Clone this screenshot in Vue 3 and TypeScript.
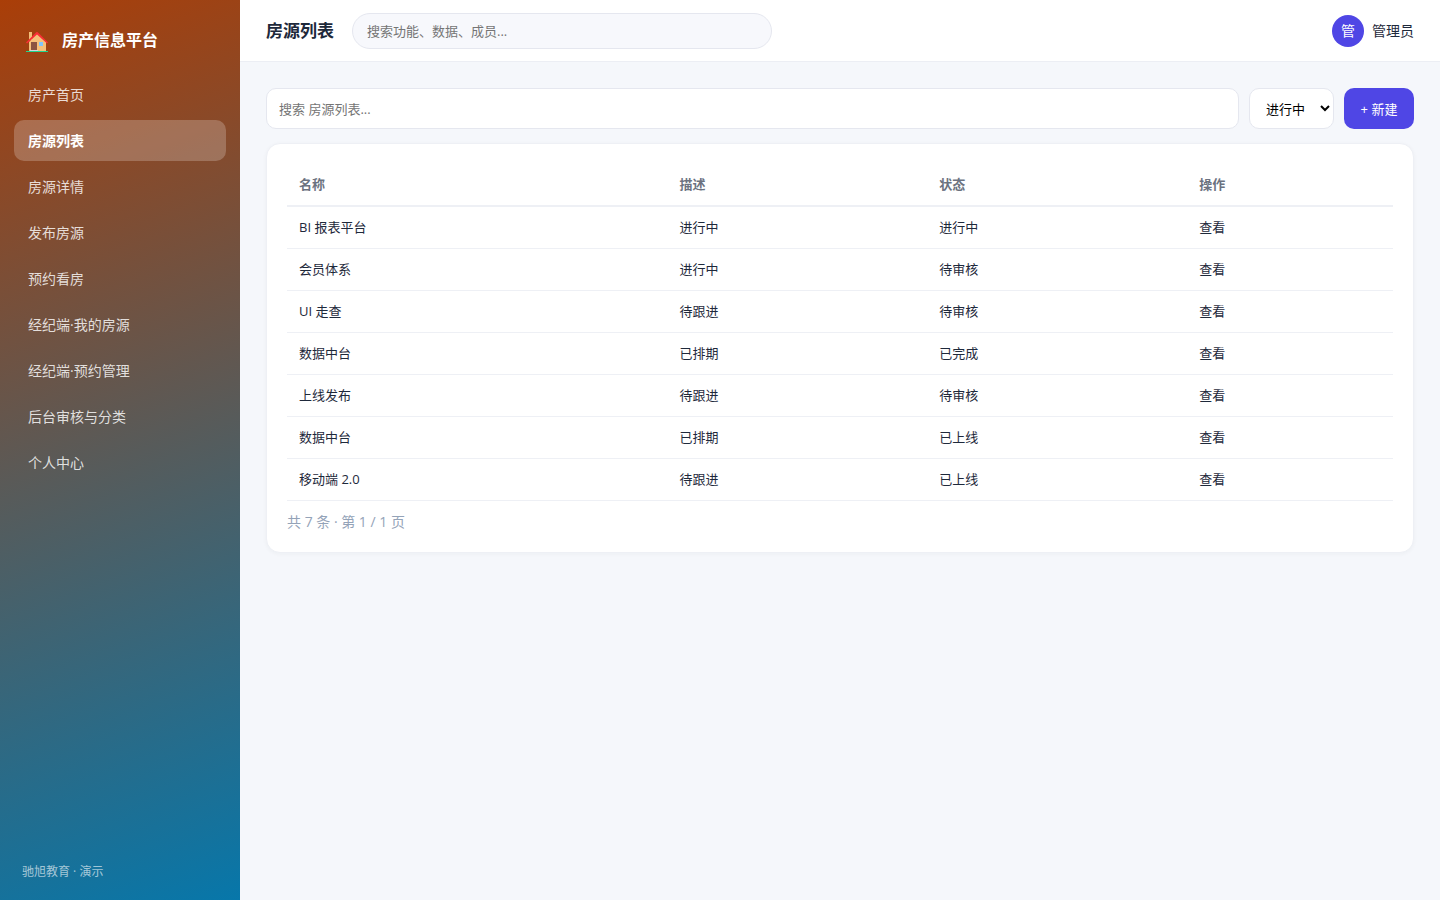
<script setup lang="ts">
import { ref } from 'vue'

interface Row {
  name: string
  desc: string
  status: string
}

const menu: string[] = [
  '房产首页',
  '房源列表',
  '房源详情',
  '发布房源',
  '预约看房',
  '经纪端·我的房源',
  '经纪端·预约管理',
  '后台审核与分类',
  '个人中心',
]
const active = ref('房源列表')
const globalQuery = ref('')
const listQuery = ref('')
const status = ref('进行中')
const statuses: string[] = ['进行中', '待审核', '已完成', '已上线']

const rows: Row[] = [
  { name: 'BI 报表平台', desc: '进行中', status: '进行中' },
  { name: '会员体系', desc: '进行中', status: '待审核' },
  { name: 'UI 走查', desc: '待跟进', status: '待审核' },
  { name: '数据中台', desc: '已排期', status: '已完成' },
  { name: '上线发布', desc: '待跟进', status: '待审核' },
  { name: '数据中台', desc: '已排期', status: '已上线' },
  { name: '移动端 2.0', desc: '待跟进', status: '已上线' },
]
</script>

<template>
  <div class="layout">
    <aside class="sidebar">
      <div class="brand">
        <svg class="logo" viewBox="0 0 22 20" aria-hidden="true">
          <path d="M3 0h3v8H3z" fill="#f2bf78" />
          <path d="M11 1 20 10v9H3v-9z" fill="#f5c07a" />
          <path d="M0 10.5 10.2.3q.8-.6 1.6 0L22 10.5l-1 .9L11 2.4 1 11.4z" fill="#f92f35" />
          <path d="M5 10h6v8H5z" fill="#8b5542" />
          <path d="M13 10h4v4h-4z" fill="#80c5fb" />
          <path d="M4 18h8v1H4z" fill="#d5d5dc" />
          <path d="M0 19h22v1H0z" fill="#20d58d" />
        </svg>
        <span>房产信息平台</span>
      </div>
      <nav class="menu">
        <a
          v-for="item in menu"
          :key="item"
          href="#"
          class="menu-item"
          :class="{ active: item === active }"
          @click.prevent="active = item"
        >{{ item }}</a>
      </nav>
      <div class="credit">驰旭教育 · 演示</div>
    </aside>

    <div class="main">
      <header class="topbar">
        <h1 class="title">房源列表</h1>
        <input v-model="globalQuery" class="global-search" type="text" placeholder="搜索功能、数据、成员..." aria-label="搜索功能、数据、成员" />
        <div class="user">
          <span class="avatar">管</span>
          <span>管理员</span>
        </div>
      </header>

      <main class="content">
        <div class="toolbar">
          <input v-model="listQuery" class="list-search" type="text" placeholder="搜索 房源列表..." aria-label="搜索 房源列表" />
          <select v-model="status" class="status" aria-label="状态">
            <option v-for="s in statuses" :key="s" :value="s">{{ s }}</option>
          </select>
          <button class="create" type="button">+ 新建</button>
        </div>

        <section class="card">
          <table class="table">
            <colgroup>
              <col class="col-name" />
              <col class="col-mid" />
              <col class="col-mid" />
              <col />
            </colgroup>
            <thead>
              <tr>
                <th>名称</th>
                <th>描述</th>
                <th>状态</th>
                <th>操作</th>
              </tr>
            </thead>
            <tbody>
              <tr v-for="(row, i) in rows" :key="i">
                <td>{{ row.name }}</td>
                <td>{{ row.desc }}</td>
                <td>{{ row.status }}</td>
                <td><a href="#" class="view" @click.prevent>查看</a></td>
              </tr>
            </tbody>
          </table>
          <div class="pager">共 7 条 · 第 1 / 1 页</div>
        </section>
      </main>
    </div>
  </div>
</template>

<style>
body {
  background: #f5f7fb;
}
</style>

<style scoped>
.layout,
.layout * {
  box-sizing: border-box;
}

.layout {
  display: flex;
  min-height: 100vh;
  background: #f5f7fb;
  color: #1e293b;
  font-family: 'Open Sans', 'Noto Sans CJK SC', sans-serif;
  font-size: 14px;
  line-height: 21px;
}

.sidebar {
  display: flex;
  flex: none;
  flex-direction: column;
  width: 240px;
  padding: 22px 14px 18px;
  background: linear-gradient(160deg, #aa3e08, #0777aa);
  color: #fff;
}

.brand {
  display: flex;
  align-items: center;
  gap: 14px;
  height: 36px;
  margin-bottom: 16px;
  padding: 0 12px;
  font-size: 16px;
  font-weight: 700;
}

.logo {
  width: 22px;
  height: 20px;
  margin-top: 4px;
}

.menu {
  display: flex;
  flex-direction: column;
  gap: 5px;
}

.menu-item {
  padding: 10px 14px;
  border-radius: 10px;
  color: rgba(255, 255, 255, 0.82);
  text-decoration: none;
}

.menu-item.active {
  background: rgba(255, 255, 255, 0.22);
  color: #fff;
  font-weight: 700;
}

.credit {
  margin-top: auto;
  padding: 0 8px;
  color: rgba(255, 255, 255, 0.62);
  font-size: 12px;
}

.main {
  flex: 1;
  min-width: 0;
}

.topbar {
  display: flex;
  align-items: center;
  gap: 18px;
  height: 62px;
  padding: 0 26px;
  border-bottom: 1px solid #eceef4;
  background: #fff;
}

.title {
  margin: 0;
  font-size: 17px;
  font-weight: 700;
}

.layout input,
.layout select,
.layout button {
  outline: none;
  font-family: inherit;
  font-size: 13px;
}

.layout input::placeholder {
  color: #757575;
}

.global-search {
  flex: 0 1 420px;
  min-width: 0;
  height: 36px;
  padding: 0 14px;
  border: 1px solid #e5e7ef;
  border-radius: 18px;
  background: #f7f8fc;
}

.user {
  display: flex;
  align-items: center;
  gap: 8px;
  margin-left: auto;
}

.avatar {
  display: grid;
  place-items: center;
  width: 32px;
  height: 32px;
  border-radius: 50%;
  background: #4f46e5;
  color: #fff;
}

.content {
  padding: 26px;
}

.toolbar {
  display: flex;
  gap: 10px;
  margin-bottom: 14px;
}

.list-search {
  flex: 1;
  min-width: 0;
  height: 41px;
  padding: 0 12px;
  border: 1px solid #e5e7ef;
  border-radius: 10px;
  background: #fff;
}

.status {
  width: 85px;
  height: 41px;
  padding: 0 0 0 12px;
  border: 1px solid #e5e7ef;
  border-radius: 10px;
  background: #fff;
  color: #000;
}

.create {
  width: 70px;
  height: 41px;
  padding: 0;
  border: 0;
  border-radius: 10px;
  background: #4f46e5;
  color: #fff;
}

.card {
  padding: 20px;
  border: 1px solid #eef0f5;
  border-radius: 14px;
  background: #fff;
  box-shadow: 0 1px 4px rgba(30, 41, 59, 0.04);
}

.table {
  width: 100%;
  border-collapse: separate;
  border-spacing: 0;
  table-layout: fixed;
  font-size: 13px;
}

.col-name {
  width: 34.4%;
}

.col-mid {
  width: 23.5%;
}

.table th,
.table td {
  padding: 10px 12px;
  text-align: left;
}

.table th {
  border-bottom: 2px solid #eef0f5;
  color: #6b7280;
  font-weight: 700;
}

.table td {
  border-bottom: 1px solid #eef0f5;
}

.view {
  color: inherit;
  text-decoration: none;
}

.pager {
  margin-top: 10px;
  color: #94a3b8;
  font-size: 14px;
}
</style>
